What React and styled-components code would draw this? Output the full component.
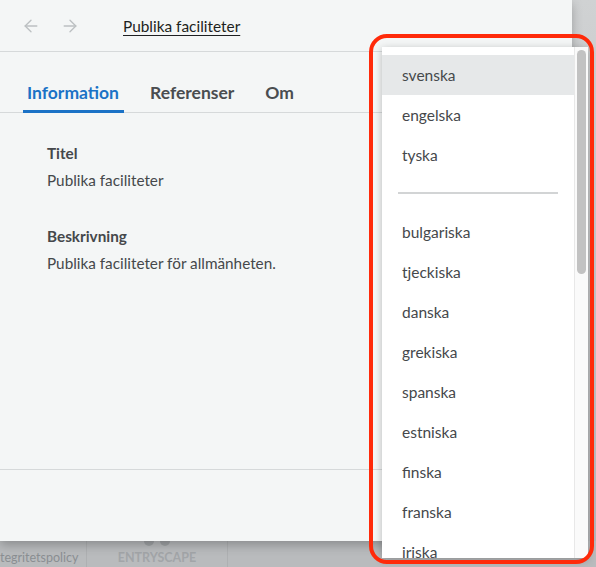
import styled, { createGlobalStyle } from "styled-components";
import { ArrowLeft, ArrowRight } from "lucide-react";

const GlobalStyle = createGlobalStyle`
  body {
    margin: 0;
    font-family: "Lato", "Liberation Sans", sans-serif;
    background: #a9abad;
  }
`;

const topLanguages = ["svenska", "engelska", "tyska"];
const otherLanguages = [
  "bulgariska",
  "tjeckiska",
  "danska",
  "grekiska",
  "spanska",
  "estniska",
  "finska",
  "franska",
  "iriska",
];

const App = () => {
  return (
    <Page>
      <GlobalStyle />
      <TopRow>
        <Modal>
          <Header>
            <NavButton>
              <ArrowLeft size={20} strokeWidth={1.6} />
            </NavButton>
            <NavButton>
              <ArrowRight size={20} strokeWidth={1.6} />
            </NavButton>
            <HeaderTitle>Publika faciliteter</HeaderTitle>
          </Header>
          <TabBar>
            <Tab $active>Information</Tab>
            <Tab>Referenser</Tab>
            <Tab>Om</Tab>
          </TabBar>
          <Content>
            <Field>
              <Label>Titel</Label>
              <Value>Publika faciliteter</Value>
            </Field>
            <Field>
              <Label>Beskrivning</Label>
              <Value>Publika faciliteter för allmänheten.</Value>
            </Field>
          </Content>
          <Footer />
        </Modal>
        <Gutter />
      </TopRow>
      <BottomBar>
        <BottomCell $w={86}>
          <BottomText>tegritetspolicy</BottomText>
        </BottomCell>
        <BottomCell $w={140} $center>
          <Dots>
            <span />
            <span />
          </Dots>
          <Brand>ENTRYSCAPE</Brand>
        </BottomCell>
      </BottomBar>

      <Menu>
        <MenuList>
          {topLanguages.map((lang, idx) => (
            <MenuItem key={lang} $selected={idx === 0}>
              {lang}
            </MenuItem>
          ))}
          <Divider />
          {otherLanguages.map((lang) => (
            <MenuItem key={lang}>{lang}</MenuItem>
          ))}
        </MenuList>
        <ScrollTrack>
          <ScrollThumb />
        </ScrollTrack>
      </Menu>
      <Highlight />
    </Page>
  );
};

export default App;

const Page = styled.div`
  position: relative;
  width: 596px;
  height: 567px;
  overflow: hidden;
  background: linear-gradient(180deg, #d0d2d3 0%, #b3b5b7 100%);
  display: flex;
  flex-direction: column;
`;

const TopRow = styled.div`
  display: flex;
  height: 541px;
  flex-shrink: 0;
  position: relative;
  z-index: 1;
`;

const Modal = styled.div`
  width: 572px;
  height: 541px;
  background: #f4f6f6;
  display: flex;
  flex-direction: column;
  box-shadow: 0 4px 10px rgba(0, 0, 0, 0.25);
`;

const Gutter = styled.div`
  flex: 1;
`;

const Header = styled.div`
  height: 51px;
  border-bottom: 1px solid #d6d9da;
  display: flex;
  align-items: center;
  padding-left: 21px;
  gap: 19px;
  flex-shrink: 0;
`;

const NavButton = styled.span`
  display: flex;
  color: #bcc0c2;
`;

const HeaderTitle = styled.span`
  margin-left: 24px;
  font-size: 15.4px;
  color: #1d1f21;
  text-decoration: underline;
  text-underline-offset: 3px;
`;

const TabBar = styled.div`
  height: 60px;
  border-bottom: 1px solid #d6d9da;
  display: flex;
  align-items: flex-end;
  padding-left: 23px;
  gap: 22px;
  flex-shrink: 0;
`;

const Tab = styled.div`
  padding: 0 5px 7px 4px;
  font-size: 17.5px;
  font-weight: 700;
  color: ${(p) => (p.$active ? "#1b72c6" : "#4a4d50")};
  border-bottom: 3px solid ${(p) => (p.$active ? "#1b72c6" : "transparent")};
  margin-bottom: -1px;
`;

const Content = styled.div`
  flex: 1;
  padding: 31px 47px 0;
  display: flex;
  flex-direction: column;
  gap: 38px;
`;

const Field = styled.div`
  display: flex;
  flex-direction: column;
  gap: 9px;
`;

const Label = styled.div`
  font-size: 15.3px;
  font-weight: 700;
  color: #45484b;
`;

const Value = styled.div`
  font-size: 15.3px;
  color: #45484b;
`;

const Footer = styled.div`
  height: 71px;
  border-top: 1px solid #d6d9da;
  flex-shrink: 0;
`;

const BottomBar = styled.div`
  flex: 1;
  display: flex;
  background: #b9bbbd;
`;

const BottomCell = styled.div`
  width: ${(p) => p.$w}px;
  border-right: 1px solid #aeb0b2;
  display: flex;
  flex-direction: column;
  align-items: ${(p) => (p.$center ? "center" : "flex-start")};
  justify-content: ${(p) => (p.$center ? "space-between" : "flex-end")};
  padding-bottom: 2px;
`;

const BottomText = styled.span`
  font-size: 12.5px;
  color: #8a8e92;
`;

const Dots = styled.div`
  display: flex;
  gap: 6px;
  margin-top: -5px;
  span {
    width: 10px;
    height: 10px;
    border-radius: 50%;
    background: #a0a3a6;
  }
`;

const Brand = styled.span`
  font-size: 12.5px;
  font-weight: 700;
  color: #a2a5a8;
`;

const Menu = styled.div`
  position: absolute;
  left: 382px;
  top: 47px;
  width: 206px;
  height: 511px;
  background: #ffffff;
  box-shadow: 0 2px 8px rgba(0, 0, 0, 0.25);
  display: flex;
  z-index: 2;
`;

const MenuList = styled.div`
  flex: 1;
  padding-top: 8px;
  overflow: hidden;
`;

const MenuItem = styled.div`
  height: 40px;
  display: flex;
  align-items: center;
  padding-left: 20px;
  font-size: 15.5px;
  color: #45484b;
  background: ${(p) => (p.$selected ? "#e6e8e9" : "transparent")};
`;

const Divider = styled.div`
  height: 2px;
  background: #d2d4d5;
  margin: 17px 16px 18px 16px;
`;

const ScrollTrack = styled.div`
  width: 14px;
  background: #fafafa;
  border-left: 1px solid #e8e8e8;
  padding: 3px 2px;
  box-sizing: border-box;
`;

const ScrollThumb = styled.div`
  height: 224px;
  border-radius: 5px;
  background: #c2c2c2;
`;

const Highlight = styled.div`
  position: absolute;
  left: 369px;
  top: 34px;
  width: 225px;
  height: 530px;
  box-sizing: border-box;
  border: 4px solid #ff2a0a;
  border-radius: 18px;
  z-index: 3;
`;
